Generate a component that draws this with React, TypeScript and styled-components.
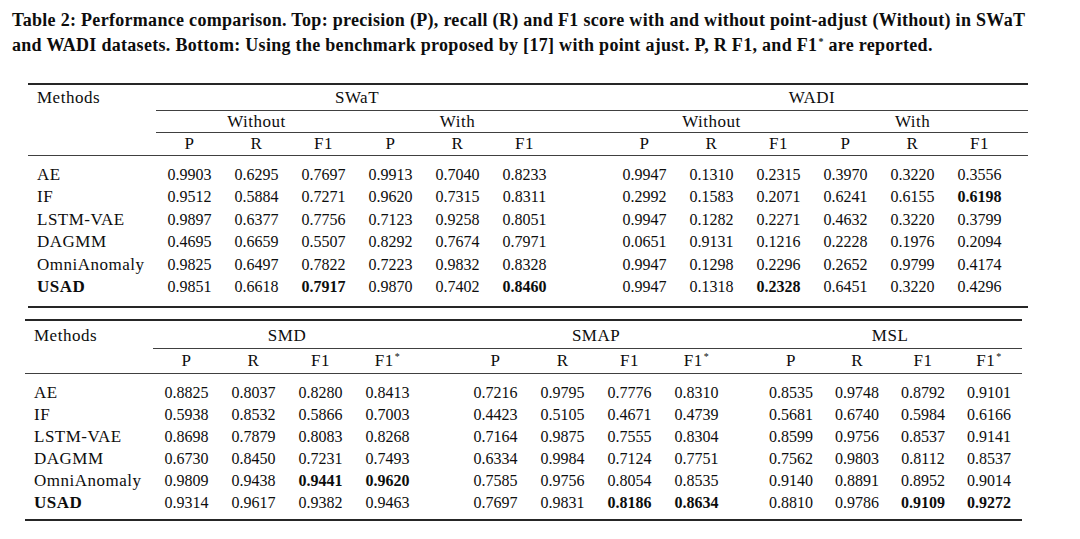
import styled, { createGlobalStyle } from "styled-components"
import { Fragment } from "react"

const GlobalStyle = createGlobalStyle`
  html, body {
    margin: 0;
    padding: 0;
    background: #ffffff;
  }
  body {
    font-family: "Liberation Serif", "Times New Roman", serif;
    color: #0d0d0d;
  }
`

type Row = {
  name: string
  values: string[]
  bold?: number[]
  strongName?: boolean
}

// column widths (px): method col, data cols, gap cols between dataset groups, right tail
const TOP_WIDTHS = [128, 67, 67, 67, 67, 67, 67, 53, 67, 67, 67, 67, 67, 67, 15]
const BOTTOM_WIDTHS = [128, 67, 67, 67, 67, 41, 67, 67, 67, 67, 28, 66, 66, 66, 66]

const topRows: Row[] = [
  { name: "AE", values: ["0.9903", "0.6295", "0.7697", "0.9913", "0.7040", "0.8233", "0.9947", "0.1310", "0.2315", "0.3970", "0.3220", "0.3556"] },
  { name: "IF", values: ["0.9512", "0.5884", "0.7271", "0.9620", "0.7315", "0.8311", "0.2992", "0.1583", "0.2071", "0.6241", "0.6155", "0.6198"], bold: [11] },
  { name: "LSTM-VAE", values: ["0.9897", "0.6377", "0.7756", "0.7123", "0.9258", "0.8051", "0.9947", "0.1282", "0.2271", "0.4632", "0.3220", "0.3799"] },
  { name: "DAGMM", values: ["0.4695", "0.6659", "0.5507", "0.8292", "0.7674", "0.7971", "0.0651", "0.9131", "0.1216", "0.2228", "0.1976", "0.2094"] },
  { name: "OmniAnomaly", values: ["0.9825", "0.6497", "0.7822", "0.7223", "0.9832", "0.8328", "0.9947", "0.1298", "0.2296", "0.2652", "0.9799", "0.4174"] },
  { name: "USAD", strongName: true, values: ["0.9851", "0.6618", "0.7917", "0.9870", "0.7402", "0.8460", "0.9947", "0.1318", "0.2328", "0.6451", "0.3220", "0.4296"], bold: [2, 5, 8] },
]

const bottomRows: Row[] = [
  { name: "AE", values: ["0.8825", "0.8037", "0.8280", "0.8413", "0.7216", "0.9795", "0.7776", "0.8310", "0.8535", "0.9748", "0.8792", "0.9101"] },
  { name: "IF", values: ["0.5938", "0.8532", "0.5866", "0.7003", "0.4423", "0.5105", "0.4671", "0.4739", "0.5681", "0.6740", "0.5984", "0.6166"] },
  { name: "LSTM-VAE", values: ["0.8698", "0.7879", "0.8083", "0.8268", "0.7164", "0.9875", "0.7555", "0.8304", "0.8599", "0.9756", "0.8537", "0.9141"] },
  { name: "DAGMM", values: ["0.6730", "0.8450", "0.7231", "0.7493", "0.6334", "0.9984", "0.7124", "0.7751", "0.7562", "0.9803", "0.8112", "0.8537"] },
  { name: "OmniAnomaly", values: ["0.9809", "0.9438", "0.9441", "0.9620", "0.7585", "0.9756", "0.8054", "0.8535", "0.9140", "0.8891", "0.8952", "0.9014"], bold: [2, 3] },
  { name: "USAD", strongName: true, values: ["0.9314", "0.9617", "0.9382", "0.9463", "0.7697", "0.9831", "0.8186", "0.8634", "0.8810", "0.9786", "0.9109", "0.9272"], bold: [6, 7, 10, 11] },
]

const Page = styled.main`
  width: 1080px;
  height: 539px;
  box-sizing: border-box;
  padding: 8px 0 0 12px;
  overflow: hidden;
`

const Caption = styled.p`
  margin: 0;
  font-size: 18px;
  line-height: 25px;
  letter-spacing: 0.3px;
  font-weight: 700;
  white-space: nowrap;
  color: #0d0d0d;
`

const CaptionLine = styled.span`
  display: block;
`

const Sheet = styled.table<{ $top: number; $left: number; $width: number }>`
  border-collapse: separate;
  border-spacing: 0;
  table-layout: fixed;
  width: ${(p) => p.$width}px;
  margin: ${(p) => p.$top}px 0 0 ${(p) => p.$left}px;
  border-top: 2px solid #262626;
  border-bottom: 2px solid #262626;
  font-size: 16px;
  color: #0d0d0d;
`

const Col = styled.col<{ $w: number }>`
  width: ${(p) => p.$w}px;
`

const Th = styled.th<{ $h: number; $rule?: boolean; $left?: boolean; $pt?: number }>`
  box-sizing: border-box;
  height: ${(p) => p.$h}px;
  padding: ${(p) => p.$pt ?? 0}px 0 0 ${(p) => (p.$left ? 9 : 0)}px;
  text-align: ${(p) => (p.$left ? "left" : "center")};
  vertical-align: middle;
  font-size: 17px;
  letter-spacing: 0.5px;
  font-weight: 400;
  line-height: 18px;
  white-space: nowrap;
  border-bottom: ${(p) => (p.$rule ? "1px solid #404040" : "none")};
`

const Td = styled.td<{ $lh: number; $pt: number; $pb: number; $bold?: boolean; $name?: boolean }>`
  padding: ${(p) => p.$pt}px 0 ${(p) => p.$pb}px ${(p) => (p.$name ? 9 : 0)}px;
  line-height: ${(p) => p.$lh}px;
  text-align: ${(p) => (p.$name ? "left" : "center")};
  font-size: ${(p) => (p.$name ? 17 : 16)}px;
  letter-spacing: ${(p) => (p.$name ? 0.5 : 0)}px;
  font-weight: ${(p) => (p.$bold ? 700 : 400)};
  white-space: nowrap;
`

const Star = styled.sup`
  font-size: 10px;
  line-height: 0;
  vertical-align: 6px;
  margin-left: 1px;
`

const F1Star = () => (
  <>
    F1<Star>*</Star>
  </>
)

type BodyProps = {
  rows: Row[]
  group: number
  lh: number
  pt: number
  pb: number
  tail?: boolean
}

const Body = ({ rows, group, lh, pt, pb, tail }: BodyProps) => (
  <tbody>
    {rows.map((row, r) => {
      const top = r === 0 ? pt : 0
      const bottom = r === rows.length - 1 ? pb : 0
      return (
        <tr key={row.name}>
          <Td $name $bold={row.strongName} $lh={lh} $pt={top} $pb={bottom}>
            {row.name}
          </Td>
          {row.values.map((v, i) => (
            <Fragment key={i}>
              {i > 0 && i % group === 0 && <Td $lh={lh} $pt={top} $pb={bottom} />}
              <Td $bold={row.bold?.includes(i)} $lh={lh} $pt={top} $pb={bottom}>
                {v}
              </Td>
            </Fragment>
          ))}
          {tail && <Td $lh={lh} $pt={top} $pb={bottom} />}
        </tr>
      )
    })}
  </tbody>
)

const sum = (list: number[]) => list.reduce((a, b) => a + b, 0)

const TopTable = () => {
  const metrics = ["P", "R", "F1", "P", "R", "F1"]
  return (
    <Sheet $top={25} $left={16} $width={sum(TOP_WIDTHS)}>
      <colgroup>
        {TOP_WIDTHS.map((w, i) => (
          <Col key={i} $w={w} />
        ))}
      </colgroup>
      <thead>
        <tr>
          <Th $h={26} $left>
            Methods
          </Th>
          <Th $h={26} $rule colSpan={6}>
            SWaT
          </Th>
          <Th $h={26} $rule />
          <Th $h={26} $rule colSpan={6}>
            WADI
          </Th>
          <Th $h={26} $rule />
        </tr>
        <tr>
          <Th $h={22} />
          <Th $h={22} $rule colSpan={3}>
            Without
          </Th>
          <Th $h={22} $rule colSpan={3}>
            With
          </Th>
          <Th $h={22} $rule />
          <Th $h={22} $rule colSpan={3}>
            Without
          </Th>
          <Th $h={22} $rule colSpan={3}>
            With
          </Th>
          <Th $h={22} $rule />
        </tr>
        <tr>
          <Th $h={23} $rule />
          {metrics.map((m, i) => (
            <Th key={"a" + i} $h={23} $rule>
              {m}
            </Th>
          ))}
          <Th $h={23} $rule />
          {metrics.map((m, i) => (
            <Th key={"b" + i} $h={23} $rule>
              {m}
            </Th>
          ))}
          <Th $h={23} $rule />
        </tr>
      </thead>
      <Body rows={topRows} group={6} lh={22.4} pt={8} pb={8} tail />
    </Sheet>
  )
}

const BottomTable = () => {
  const sets = ["SMD", "SMAP", "MSL"]
  return (
    <Sheet $top={11} $left={13} $width={sum(BOTTOM_WIDTHS)}>
      <colgroup>
        {BOTTOM_WIDTHS.map((w, i) => (
          <Col key={i} $w={w} />
        ))}
      </colgroup>
      <thead>
        <tr>
          <Th $h={28} $pt={2} $left>
            Methods
          </Th>
          {sets.map((s, i) => (
            <Fragment key={s}>
              {i > 0 && <Th $h={28} $pt={2} $rule />}
              <Th $h={28} $pt={2} $rule colSpan={4}>
                {s}
              </Th>
            </Fragment>
          ))}
        </tr>
        <tr>
          <Th $h={25} $rule />
          {sets.map((s, i) => (
            <Fragment key={s}>
              {i > 0 && <Th $h={25} $rule />}
              <Th $h={25} $rule>P</Th>
              <Th $h={25} $rule>R</Th>
              <Th $h={25} $rule>F1</Th>
              <Th $h={25} $rule>
                <F1Star />
              </Th>
            </Fragment>
          ))}
        </tr>
      </thead>
      <Body rows={bottomRows} group={4} lh={22} pt={8} pb={5} />
    </Sheet>
  )
}

export default function App() {
  return (
    <>
      <GlobalStyle />
      <Page>
        <Caption>
          <CaptionLine>
            Table 2: Performance comparison. Top: precision (P), recall (R) and F1 score with and without point-adjust (Without) in SWaT
          </CaptionLine>
          <CaptionLine>
            and WADI datasets. Bottom: Using the benchmark proposed by [17] with point ajust. P, R F1, and F1<Star>*</Star> are reported.
          </CaptionLine>
        </Caption>
        <TopTable />
        <BottomTable />
      </Page>
    </>
  )
}
